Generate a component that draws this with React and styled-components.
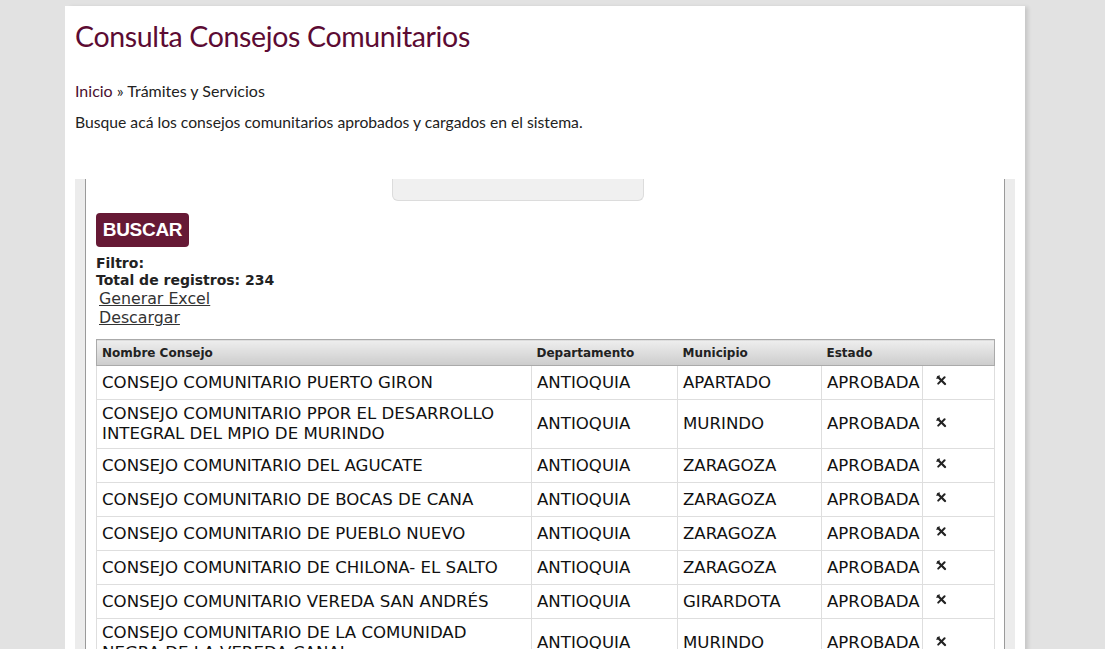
import React from "react";
import styled, { createGlobalStyle } from "styled-components";

const Global = createGlobalStyle`
  html, body { margin: 0; padding: 0; }
  body { background: #e2e2e2; font-family: "Lato", "Open Sans", sans-serif; }
`;

const Page = styled.div`
  width: 960px;
  margin: 6px 0 0 65px;
  background: #fff;
  box-shadow: 4px 0 4px -1px rgba(0,0,0,0.12);
  min-height: 643px;
`;

const Header = styled.header`
  padding: 12px 10px 0 10px;
  height: 156px;
  box-sizing: border-box;
`;

const Title = styled.h1`
  margin: 0;
  font-family: "Lato", sans-serif;
  font-weight: 400;
  font-size: 28.5px;
  line-height: 36px;
  color: #5c0b33;
  letter-spacing: -0.35px;
`;

const Crumbs = styled.div`
  margin-top: 27px;
  font-size: 16px;
  line-height: 20px;
  color: #222;
`;

const CrumbLink = styled.a`
  color: #4a1030;
  text-decoration: none;
`;

const Lead = styled.p`
  margin: 11px 0 0;
  font-size: 15.7px;
  line-height: 20px;
  color: #222;
`;

const Frame = styled.div`
  margin: 17px 10px 0;
  background: #ececec;
  padding: 0 10px;
`;

const Inner = styled.div`
  background: #fff;
  border-left: 1px solid #9a9a9a;
  border-right: 1px solid #9a9a9a;
  padding: 0 10px;
`;

const FilterBox = styled.div`
  margin-left: 296px;
  width: 252px;
  height: 22px;
  background: #f0f0f0;
  border: 1px solid #dcdcdc;
  border-top: none;
  border-radius: 0 0 6px 6px;
  box-sizing: border-box;
`;

const SearchButton = styled.button`
  margin-top: 12px;
  display: block;
  background: #661935;
  color: #fff;
  border: none;
  border-radius: 4px;
  font-family: "Liberation Sans", Arial, sans-serif;
  font-weight: 700;
  font-size: 19px;
  height: 34px;
  width: 93px;
  padding: 0;
  letter-spacing: -0.3px;
`;

const Info = styled.div`
  margin-top: 8px;
  font-family: "DejaVu Sans", Verdana, sans-serif;
  font-weight: 700;
  font-size: 14px;
  line-height: 17px;
  color: #222;
`;

const Links = styled.div`
  display: flex;
  flex-direction: column;
  align-items: flex-start;
  padding-left: 3px;
`;

const TextLink = styled.a`
  font-family: "DejaVu Sans", Verdana, sans-serif;
  font-size: 15.8px;
  line-height: 19px;
  color: #333;
  text-decoration: underline;
`;

const Table = styled.table`
  margin-top: 12px;
  width: 898px;
  table-layout: fixed;
  border-collapse: collapse;
  font-family: "DejaVu Sans", Verdana, sans-serif;
  color: #111;
`;

const Th = styled.th`
  text-align: left;
  font-size: 12px;
  font-weight: 700;
  color: #222;
  height: 25px;
  padding: 0 5px;
  background: linear-gradient(#eeeeee, #cccccc);
  border-top: 1px solid #aaa;
  border-bottom: 1px solid #aaa;
  &:first-child { border-left: 1px solid #aaa; }
  &:last-child { border-right: 1px solid #aaa; }
`;

const Td = styled.td`
  font-size: 16.6px;
  line-height: 20px;
  height: 25px;
  padding: 4px 5px;
  border: 1px solid #dedede;
  vertical-align: middle;
`;

const IconCell = styled(Td)`
  padding-left: 13px;
`;

const IconWrap = styled.span`
  display: block;
  width: 11px;
  height: 11px;
  margin-top: -4px;
`;

const Row = styled.tr`
  height: 34px;
`;

const cols = [435, 146, 144, 101, 72];

const XIcon = () => (
  <IconWrap>
    <svg width="11" height="11" viewBox="0 0 11 11" style={{ display: "block" }}>
      <path d="M2 2 L9 9" stroke="#222" strokeWidth="2.3" strokeLinecap="round" />
      <path d="M8.6 2.2 L2.2 8.6" stroke="#222" strokeWidth="2" strokeLinecap="round" />
      <path d="M1 3.2 L3.2 1" stroke="#222" strokeWidth="1.4" strokeLinecap="round" />
    </svg>
  </IconWrap>
);

const rows = [
  ["CONSEJO COMUNITARIO PUERTO GIRON", "ANTIOQUIA", "APARTADO", "APROBADA"],
  ["CONSEJO COMUNITARIO PPOR EL DESARROLLO INTEGRAL DEL MPIO DE MURINDO", "ANTIOQUIA", "MURINDO", "APROBADA"],
  ["CONSEJO COMUNITARIO DEL AGUCATE", "ANTIOQUIA", "ZARAGOZA", "APROBADA"],
  ["CONSEJO COMUNITARIO DE BOCAS DE CANA", "ANTIOQUIA", "ZARAGOZA", "APROBADA"],
  ["CONSEJO COMUNITARIO DE PUEBLO NUEVO", "ANTIOQUIA", "ZARAGOZA", "APROBADA"],
  ["CONSEJO COMUNITARIO DE CHILONA- EL SALTO", "ANTIOQUIA", "ZARAGOZA", "APROBADA"],
  ["CONSEJO COMUNITARIO VEREDA SAN ANDRÉS", "ANTIOQUIA", "GIRARDOTA", "APROBADA"],
  ["CONSEJO COMUNITARIO DE LA COMUNIDAD NEGRA DE LA VEREDA CANAL", "ANTIOQUIA", "MURINDO", "APROBADA"],
];

export default function App() {
  return (
    <>
      <Global />
      <Page>
        <Header>
          <Title>Consulta Consejos Comunitarios</Title>
          <Crumbs>
            <CrumbLink href="#">Inicio</CrumbLink> » Trámites y Servicios
          </Crumbs>
          <Lead>Busque acá los consejos comunitarios aprobados y cargados en el sistema.</Lead>
        </Header>
        <Frame>
          <Inner>
            <FilterBox />
            <SearchButton>BUSCAR</SearchButton>
            <Info>
              <div>Filtro:</div>
              <div>Total de registros: 234</div>
            </Info>
            <Links>
              <TextLink href="#">Generar Excel</TextLink>
              <TextLink href="#">Descargar</TextLink>
            </Links>
            <Table>
              <colgroup>
                {cols.map((w, i) => (
                  <col key={i} style={{ width: w }} />
                ))}
              </colgroup>
              <thead>
                <tr>
                  <Th>Nombre Consejo</Th>
                  <Th>Departamento</Th>
                  <Th>Municipio</Th>
                  <Th>Estado</Th>
                  <Th />
                </tr>
              </thead>
              <tbody>
                {rows.map((r, i) => (
                  <Row key={i}>
                    <Td>{r[0]}</Td>
                    <Td>{r[1]}</Td>
                    <Td>{r[2]}</Td>
                    <Td>{r[3]}</Td>
                    <IconCell>
                      <XIcon />
                    </IconCell>
                  </Row>
                ))}
              </tbody>
            </Table>
          </Inner>
        </Frame>
      </Page>
    </>
  );
}
